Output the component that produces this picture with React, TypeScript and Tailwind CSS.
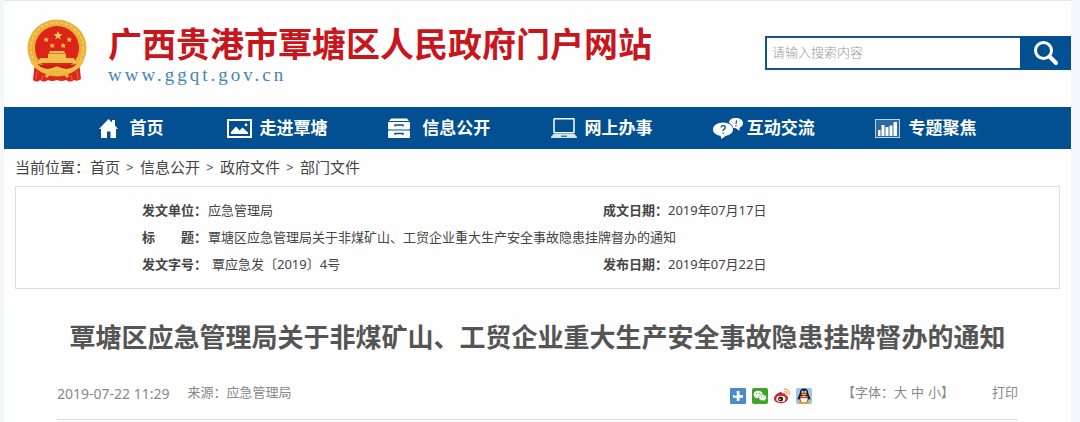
import React from 'react';

const Emblem: React.FC = () => (
  <svg viewBox="0 0 60 64" className="h-16 w-[60px] shrink-0" aria-hidden="true">
    <path d="M8 42 L6 61 Q10 64 13 61 Q17 64 21 61 Q25 63 30 61 Q35 63 39 61 Q43 64 47 61 Q50 63 54 60 L52 42 Z" fill="#d92a1c" />
    <ellipse cx="30" cy="29" rx="29.5" ry="28.5" fill="#e9b03c" />
    <ellipse cx="30" cy="29" rx="26.5" ry="25.5" fill="none" stroke="#f3c95a" strokeWidth="2" strokeDasharray="3 2" />
    <circle cx="30" cy="29" r="22" fill="#dc2418" />
    <path d="M31 12 l1.2 3 3.2.2 -2.5 2 .8 3.2 -2.7-1.8 -2.7 1.8 .8-3.2 -2.5-2 3.2-.2z" fill="#f8d357" />
    <g fill="#f4c04d">
      <path d="M19 18 l1 1.6 1.9.1 -1.2 1.4 .4 1.8 -1.8-.8 -1.7.9 .2-1.9 -1.3-1.4 1.9-.3z" />
      <path d="M42 18 l1 1.6 1.9.1 -1.2 1.4 .4 1.8 -1.8-.8 -1.7.9 .2-1.9 -1.3-1.4 1.9-.3z" />
      <path d="M25 24 l1 1.6 1.9.1 -1.2 1.4 .4 1.8 -1.8-.8 -1.7.9 .2-1.9 -1.3-1.4 1.9-.3z" />
      <path d="M36 24 l1 1.6 1.9.1 -1.2 1.4 .4 1.8 -1.8-.8 -1.7.9 .2-1.9 -1.3-1.4 1.9-.3z" />
      <path d="M23 32 h14 l1.5 2.5 h-17z M21 35 h18 v4 h-18z M13 39 h34 l2 5 h-38z" />
    </g>
    <path d="M10 45 Q30 49 50 45 L47 49 Q30 53 13 49z" fill="#c81e16" />
    <path d="M5 42 Q14 55 26 51 Q30 48 34 51 Q46 55 55 42" fill="none" stroke="#f0bd45" strokeWidth="4" />
    <path d="M19 58 Q25 50 30 55 Q35 50 41 58" fill="none" stroke="#f0b63e" strokeWidth="3" />
    <path d="M10 52 L9 60 M16 56 L15 61 M44 56 L45 61 M50 52 L51 60" stroke="#ef5a3c" strokeWidth="1.2" />
  </svg>
);

const HomeIcon = () => (
  <svg viewBox="0 0 19 19" className="h-[19px] w-[19px]" fill="#fff" aria-hidden="true">
    <path d="M9.5 0 L13 3.6 V1 H16 V6.6 L19 10 H17 V19 H11.5 V12.5 H8 V19 H2 V10 H0 Z" />
  </svg>
);

const PictureIcon = () => (
  <svg viewBox="0 0 25 19" className="h-[19px] w-[25px]" aria-hidden="true">
    <rect x="1" y="1" width="23" height="17" fill="none" stroke="#fff" strokeWidth="2" />
    <path d="M4 15 V13 L9 7.5 L12.5 11.5 L15.5 8.5 L21 13.5 V15 Z" fill="#fff" />
    <circle cx="19" cy="5.8" r="1.4" fill="#fff" />
  </svg>
);

const DrawerIcon = () => (
  <svg viewBox="0 0 22 20" className="h-5 w-[22px]" fill="#fff" aria-hidden="true">
    <path d="M3 0.5 H19 L21 3 H1 Z" />
    <rect y="4" width="22" height="7.5" rx="1" />
    <rect y="12.5" width="22" height="7.5" rx="1" />
    <path d="M7 8.5 V7 H15 V8.5 M7 17 V15.5 H15 V17" fill="none" stroke="#025091" strokeWidth="1.3" />
  </svg>
);

const LaptopIcon = () => (
  <svg viewBox="0 0 26 20" className="h-5 w-[26px]" aria-hidden="true">
    <rect x="3" y="0.8" width="20" height="14" rx="0.5" fill="none" stroke="#fff" strokeWidth="1.5" />
    <path d="M2.5 16 H23.5 L26 19 V20 H0 V19 Z" fill="#d3e4f2" />
    <path d="M10 18.2 H16" stroke="#025091" strokeWidth="1" />
  </svg>
);

const ChatIcon = () => (
  <svg viewBox="0 0 30 21" className="h-[21px] w-[30px]" aria-hidden="true">
    <path d="M22.5 0 C27 0 30 2 30 5 C30 7.6 28.5 9 26.5 9.7 L26.5 13 L23 10.2 C18 10.2 16 8 16 5 C16 2 18.5 0 22.5 0Z" fill="#fff" />
    <ellipse cx="10" cy="11.5" rx="10.6" ry="8" fill="#025091" />
    <path d="M10 4.5 C15.5 4.5 20 7.5 20 11.5 C20 15 16.5 17.4 12.5 17.9 L8.5 21 L7.5 17.8 C3 17 0 14.8 0 11.5 C0 7.5 4.5 4.5 10 4.5Z" fill="#fff" />
    <path d="M8 9.5 Q8.2 7.5 10.3 7.6 Q12.6 7.8 12.2 9.8 Q11.9 10.8 10.8 11.4 Q10 12 10 13 M10 14.4 V15.8" fill="none" stroke="#025091" strokeWidth="1.3" />
    <path d="M23.5 2.3 L23 6 M22.9 7 V8.3" stroke="#025091" strokeWidth="1.2" />
  </svg>
);

const ChartIcon = () => (
  <svg viewBox="0 0 25 19" className="h-[19px] w-[25px]" aria-hidden="true">
    <rect x="0.5" y="0.5" width="24" height="18" fill="#2b6ba4" stroke="#b9d3e9" />
    <path d="M3 17 V11 H5.5 V17Z M6.5 17 V6 H9.5 V17Z M10.5 17 V8 H13.5 V17Z M14.5 17 V6.5 H17.5 V17Z M18.5 17 V3 H22 V17Z" fill="#fff" />
  </svg>
);

const SearchIcon = () => (
  <svg viewBox="0 0 26 26" className="h-[26px] w-[26px]" fill="none" stroke="#fff" aria-hidden="true">
    <circle cx="10.5" cy="10.5" r="8" strokeWidth="3" />
    <path d="M16.5 16.5 L23 23" strokeWidth="4" strokeLinecap="round" />
  </svg>
);

const MoreIcon = () => (
  <svg viewBox="0 0 16 16" className="h-4 w-4" aria-hidden="true">
    <rect width="16" height="16" rx="1" fill="#4a8ccb" />
    <path d="M6.7 3 H9.5 V7 H13 V9.7 H9.5 V13 H6.7 V9.7 H3 V7 H4.8 V8 H6.7Z" fill="#fff" />
  </svg>
);

const WechatIcon = () => (
  <svg viewBox="0 0 16 16" className="h-4 w-4" aria-hidden="true">
    <rect width="16" height="16" rx="2" fill="#3ea52b" />
    <path d="M6.2 2.8 C3.6 2.8 1.7 4.4 1.7 6.4 C1.7 7.6 2.3 8.5 3.3 9.1 L3 10.6 L4.7 9.8 L6.2 10 C8.8 10 10.7 8.4 10.7 6.4 C10.7 4.4 8.8 2.8 6.2 2.8Z" fill="#fff" />
    <path d="M10.6 6.4 C8.4 6.4 6.8 7.8 6.8 9.5 C6.8 11.3 8.4 12.7 10.6 12.7 L11.8 12.5 L13.3 13.4 L13 12 C14 11.4 14.5 10.5 14.5 9.5 C14.5 7.8 12.8 6.4 10.6 6.4Z" fill="#fff" stroke="#3ea52b" strokeWidth="0.6" />
    <g fill="#3ea52b">
      <circle cx="4.7" cy="5.6" r="0.7" />
      <circle cx="7.7" cy="5.6" r="0.7" />
      <circle cx="9.4" cy="8.8" r="0.6" />
      <circle cx="12" cy="8.8" r="0.6" />
    </g>
  </svg>
);

const WeiboIcon = () => (
  <svg viewBox="0 0 16 16" className="h-4 w-4" aria-hidden="true">
    <path d="M6.5 4 C7.8 3.6 8.2 4.4 7.9 5.6 C10 4.8 11.8 5 11.4 7 C13 7.5 14 8.4 14 10 C14 12.8 11 15.3 7 15.3 C3 15.3 0 13.4 0 10.6 C0 8 3.5 4.8 6.5 4Z" fill="#d3222b" />
    <ellipse cx="6.9" cy="10.9" rx="4.6" ry="3.1" fill="#fff" />
    <circle cx="6.6" cy="11" r="2.5" fill="#3a1416" />
    <circle cx="5.9" cy="11.4" r="0.8" fill="#fff" />
    <path d="M10 1.2 C13.3 0.6 16 3.3 15 6.8 M10.3 3.6 C12.2 3.3 13.3 4.6 12.8 6.3" fill="none" stroke="#eba448" strokeWidth="1.2" />
  </svg>
);

const QqIcon = () => (
  <svg viewBox="0 0 16 16" className="h-4 w-4" aria-hidden="true">
    <rect width="16" height="16" rx="2" fill="#9cc7e6" />
    <path d="M8 0.5 C5 0.5 3.8 2.6 3.8 5.2 C3 7.2 1.3 9.5 1.6 11.8 L3.4 11 C3.8 13.5 5.5 15 8 15 C10.5 15 12.2 13.5 12.6 11 L14.4 11.8 C14.7 9.5 13 7.2 12.2 5.2 C12.2 2.6 11 0.5 8 0.5Z" fill="#1b1d22" />
    <ellipse cx="8" cy="11.2" rx="3.6" ry="3.4" fill="#fff" />
    <path d="M3.7 7.6 Q8 10 12.3 7.6 L12 9.4 Q8 11.3 4 9.4Z" fill="#d8402b" />
    <ellipse cx="6.6" cy="3.9" rx="1.1" ry="1.5" fill="#fff" />
    <ellipse cx="9.4" cy="3.9" rx="1.1" ry="1.5" fill="#fff" />
    <circle cx="6.9" cy="4.1" r="0.5" fill="#111" />
    <circle cx="9.1" cy="4.1" r="0.5" fill="#111" />
    <path d="M4.6 6.3 Q8 4.7 11.4 6.3 Q8 8.8 4.6 6.3Z M2.4 14.6 Q5 12.4 7.7 14.6 L7.2 16 H2.8Z M13.6 14.6 Q11 12.4 8.3 14.6 L8.8 16 H13.2Z" fill="#f39a1d" />
  </svg>
);

const navItems = [
  { label: '走进覃塘', icon: <PictureIcon />, gap: 'gap-2' },
  { label: '信息公开', icon: <DrawerIcon />, gap: 'gap-3' },
  { label: '网上办事', icon: <LaptopIcon />, gap: 'gap-2' },
  { label: '互动交流', icon: <ChatIcon />, gap: 'gap-1' },
  { label: '专题聚焦', icon: <ChartIcon />, gap: 'gap-2' },
];

const crumbs = ['首页', '信息公开', '政府文件', '部门文件'];

const shareItems = [
  { label: '更多分享', icon: <MoreIcon /> },
  { label: '微信', icon: <WechatIcon /> },
  { label: '微博', icon: <WeiboIcon /> },
  { label: 'QQ', icon: <QqIcon /> },
];

const docTitle = '覃塘区应急管理局关于非煤矿山、工贸企业重大生产安全事故隐患挂牌督办的通知';

const App: React.FC = () => {
  return (
    <div className="bg-[#f4f8fc] pl-1 pr-[9px] font-['Noto_Sans','Noto_Sans_CJK_SC',sans-serif] text-[#444]">
      <div className="min-h-screen border-t border-[#e6e6e6] bg-[#fefefe]">
        <header className="flex h-[106px] items-start justify-between pl-[23px] pt-[18px]">
          <div className="flex gap-[21px]">
            <Emblem />
            <div className="pt-1">
              <h1 className="text-[34px] font-bold leading-[42px] text-[#c8161d]">广西贵港市覃塘区人民政府门户网站</h1>
              <a href="#" className="block font-['Liberation_Serif',serif] text-[19px] leading-5 tracking-[3px] text-[#4685b5]">
                www.ggqt.gov.cn
              </a>
            </div>
          </div>
          <form className="mt-[17px] flex h-[34px] w-[306px]" onSubmit={(e) => e.preventDefault()}>
            <input
              type="text"
              aria-label="搜索"
              placeholder="请输入搜索内容"
              className="min-w-0 flex-1 border-2 border-r-0 border-[#125388] bg-white px-[5px] text-[13px] outline-none placeholder:font-light placeholder:text-[#999]"
            />
            <button type="submit" aria-label="搜索" className="flex w-[51px] items-center justify-center bg-[#025091]">
              <SearchIcon />
            </button>
          </form>
        </header>

        <nav className="flex h-[42px] items-center bg-[#025091] pl-[62px] pr-16 text-[17px] font-bold text-white">
          <a href="#" className="flex w-[130px] items-center justify-center gap-3">
            <HomeIcon />
            首页
          </a>
          {navItems.map((item) => (
            <a key={item.label} href="#" className={`flex flex-1 items-center justify-center ${item.gap}`}>
              {item.icon}
              {item.label}
            </a>
          ))}
        </nav>

        <main className="px-[11px]">
          <div className="flex h-[37px] items-center text-[15px]">
            <span>当前位置：</span>
            {crumbs.map((crumb, i) => (
              <React.Fragment key={crumb}>
                {i > 0 && <span className="w-5 text-center text-[13px]">&gt;</span>}
                <a href="#">{crumb}</a>
              </React.Fragment>
            ))}
          </div>

          <div className="border border-[#dde0e2] py-[10px] pl-[126px]">
            <table className="w-full table-fixed text-left text-[13px] leading-[27px]">
              <colgroup>
                <col className="w-[66px]" />
                <col className="w-[395px]" />
                <col className="w-[65px]" />
                <col />
              </colgroup>
              <tbody>
                <tr>
                  <th scope="row">发文单位：</th>
                  <td>应急管理局</td>
                  <th scope="row">成文日期：</th>
                  <td>2019年07月17日</td>
                </tr>
                <tr>
                  <th scope="row">标&#12288;&#12288;题：</th>
                  <td colSpan={3}>{docTitle}</td>
                </tr>
                <tr>
                  <th scope="row">发文字号：</th>
                  <td className="pl-1">覃应急发〔2019〕4号</td>
                  <th scope="row">发布日期：</th>
                  <td>2019年07月22日</td>
                </tr>
              </tbody>
            </table>
          </div>

          <article className="px-[42px] pt-7">
            <h2 className="text-center text-[26px] font-bold leading-[40px] text-[#555]">{docTitle}</h2>
            <div className="mt-2.5 flex h-[53px] items-center border-b border-[#ddd] text-[13px] text-[#888]">
              <time className="text-[14px]">2019-07-22 11:29</time>
              <span className="ml-[18px]">来源：应急管理局</span>
              <div className="ml-auto flex gap-1.5 pt-1.5">
                {shareItems.map((item) => (
                  <button key={item.label} type="button" aria-label={item.label}>
                    {item.icon}
                  </button>
                ))}
              </div>
              <div className="ml-[30px] flex">
                <span>【字体：</span>
                <div className="flex gap-1">
                  <button type="button">大</button>
                  <button type="button">中</button>
                  <button type="button">小</button>
                </div>
                <span>】</span>
              </div>
              <button type="button" className="ml-[38px]">打印</button>
            </div>
          </article>
        </main>
      </div>
    </div>
  );
};

export default App;
